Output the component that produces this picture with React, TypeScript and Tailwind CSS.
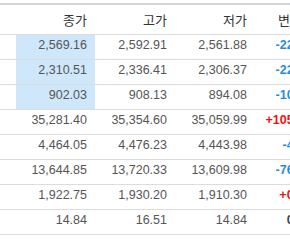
import React from "react";

const rows = [
  { c: "2,569.16", h: "2,592.91", l: "2,561.88", d: "-22.55", t: "down", hl: true },
  { c: "2,310.51", h: "2,336.41", l: "2,306.37", d: "-22.79", t: "down", hl: true },
  { c: "902.03", h: "908.13", l: "894.08", d: "-10.27", t: "down", hl: true },
  { c: "35,281.40", h: "35,354.60", l: "35,059.99", d: "+105.25", t: "up", hl: false },
  { c: "4,464.05", h: "4,476.23", l: "4,443.98", d: "-4.63", t: "down", hl: false },
  { c: "13,644.85", h: "13,720.33", l: "13,609.98", d: "-76.41", t: "down", hl: false },
  { c: "1,922.75", h: "1,930.20", l: "1,910.30", d: "+0.91", t: "up", hl: false },
  { c: "14.84", h: "16.51", l: "14.84", d: "0.00", t: "flat", hl: false },
];

export default function App() {
  const font = { fontFamily: '"Liberation Sans", Arial, "Noto Sans CJK KR", sans-serif' };
  return (
    <div className="w-[290px] h-[240px] overflow-hidden bg-white pt-[3px]" style={font}>
      <table className="table-fixed border-collapse w-[326px] text-[12.5px] text-[#555]">
        <colgroup>
          <col className="w-[16px]" />
          <col className="w-[79px]" />
          <col className="w-[80px]" />
          <col className="w-[80px]" />
          <col className="w-[71px]" />
        </colgroup>
        <thead>
          <tr className="h-[30px] border-t-2 border-t-[#d4d4d4] border-b border-b-[#dcdcdc]">
            <th></th>
            <th className="text-right pr-2 font-normal text-[#333] text-[13px]" style={{ fontFamily: '"Noto Sans CJK KR", sans-serif' }}>종가</th>
            <th className="text-right pr-2 font-normal text-[#333] text-[13px]" style={{ fontFamily: '"Noto Sans CJK KR", sans-serif' }}>고가</th>
            <th className="text-right pr-2 font-normal text-[#333] text-[13px]" style={{ fontFamily: '"Noto Sans CJK KR", sans-serif' }}>저가</th>
            <th className="text-right pr-[24px] font-normal text-[#333] text-[13px]" style={{ fontFamily: '"Noto Sans CJK KR", sans-serif' }}>변동</th>
          </tr>
        </thead>
        <tbody>
          {rows.map((r, i) => (
            <tr key={i} className="h-[25px] border-b border-b-[#dcdcdc]">
              <td></td>
              <td className={`text-right pr-2 pb-[3px] ${r.hl ? "bg-[#cfe7fb]" : ""}`}>{r.c}</td>
              <td className="text-right pr-2 pb-[3px]">{r.h}</td>
              <td className="text-right pr-2 pb-[3px]">{r.l}</td>
              <td
                className={`text-right pr-[15px] pb-[3px] font-bold ${
                  r.t === "down" ? "text-[#1f8de0]" : r.t === "up" ? "text-[#f01010]" : "text-[#444]"
                }`}
              >
                {r.d}
              </td>
            </tr>
          ))}
        </tbody>
      </table>
    </div>
  );
}
